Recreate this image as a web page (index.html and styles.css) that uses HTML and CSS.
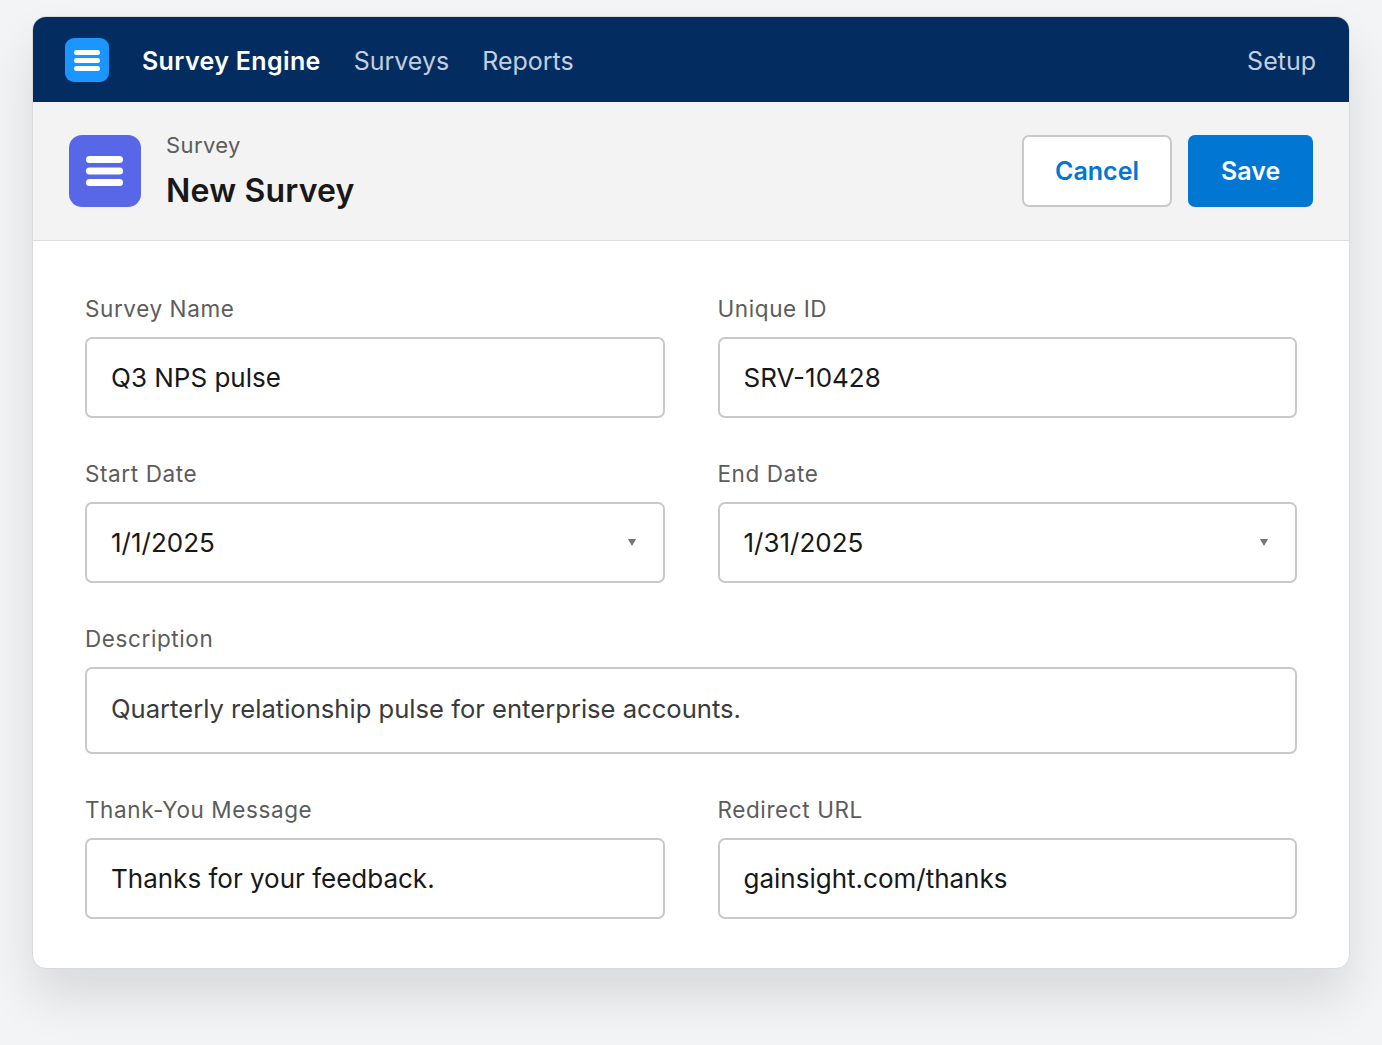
FILE: index.html
```html
<!DOCTYPE html>
<html lang="en">
<head>
<meta charset="utf-8">
<title>New Survey</title>
<link rel="stylesheet" href="styles.css">
</head>
<body>
<div class="card">
  <nav class="topnav">
    <div class="app-icon">
      <svg width="44" height="44" viewBox="0 0 44 44"><rect width="44" height="44" rx="9" fill="#1b96ff"/><rect x="9" y="12" width="26" height="5" rx="2.5" fill="#fff"/><rect x="9" y="20" width="26" height="5" rx="2.5" fill="#fff"/><rect x="9" y="28" width="26" height="5" rx="2.5" fill="#fff"/></svg>
    </div>
    <span class="app-name">Survey Engine</span>
    <a class="nav-link">Surveys</a>
    <a class="nav-link">Reports</a>
    <span class="spacer"></span>
    <a class="nav-link">Setup</a>
  </nav>
  <header class="page-header">
    <div class="obj-icon">
      <svg width="72" height="72" viewBox="0 0 72 72"><rect width="72" height="72" rx="13" fill="#5867e8"/><rect x="17" y="21" width="37" height="7" rx="3.5" fill="#fff"/><rect x="17" y="32.5" width="37" height="7" rx="3.5" fill="#fff"/><rect x="17" y="44" width="37" height="7" rx="3.5" fill="#fff"/></svg>
    </div>
    <div class="titles">
      <div class="eyebrow">Survey</div>
      <h1 class="title">New Survey</h1>
    </div>
    <span class="spacer"></span>
    <button class="btn btn-neutral">Cancel</button>
    <button class="btn btn-brand">Save</button>
  </header>
  <form class="form">
    <div class="field">
      <label class="label">Survey Name</label>
      <div class="input">Q3 NPS pulse</div>
    </div>
    <div class="field">
      <label class="label">Unique ID</label>
      <div class="input">SRV-10428</div>
    </div>
    <div class="field">
      <label class="label">Start Date</label>
      <div class="input select">1/1/2025<span class="caret"></span></div>
    </div>
    <div class="field">
      <label class="label">End Date</label>
      <div class="input select">1/31/2025<span class="caret"></span></div>
    </div>
    <div class="field full">
      <label class="label">Description</label>
      <div class="input textarea">Quarterly relationship pulse for enterprise accounts.</div>
    </div>
    <div class="field">
      <label class="label">Thank-You Message</label>
      <div class="input">Thanks for your feedback.</div>
    </div>
    <div class="field">
      <label class="label">Redirect URL</label>
      <div class="input">gainsight.com/thanks</div>
    </div>
  </form>
</div>
</body>
</html>
```

FILE: styles.css
```css
* { box-sizing: border-box; }
html, body { margin: 0; }
body {
  background: #f3f4f6;
  font-family: Inter, "Noto Sans", "Liberation Sans", sans-serif;
  padding: 16px 32px 0 32px;
  height: 1045px;
  overflow: hidden;
}
.card {
  width: 1318px;
  background: #fff;
  border: 1px solid #d9dbde;
  border-radius: 14px;
  overflow: hidden;
  box-shadow: 0 28px 50px rgba(0, 0, 0, 0.11);
}
.topnav {
  height: 85px;
  background: #032d60;
  display: flex;
  align-items: center;
  padding: 2px 33px 0 32px;
}
.app-icon { width: 44px; height: 44px; display: flex; margin-right: 33px; margin-top: -2px; }
.app-name {
  color: #fff;
  font-size: 25px;
  font-weight: 600;
  margin-right: 33px;
  letter-spacing: 0.35px;
}
.nav-link {
  color: #c3cfdf;
  font-size: 25px;
  margin-right: 33px;
}
.nav-link:last-child { margin-right: 0; }
.spacer { flex: 1; }
.page-header {
  height: 139px;
  background: #f3f3f3;
  border-bottom: 1px solid #dddddd;
  display: flex;
  align-items: center;
  padding: 0 36px 0 36px;
}
.obj-icon { width: 72px; height: 72px; display: flex; margin-right: 25px; }
.titles { display: flex; flex-direction: column; margin-top: -3px; }
.eyebrow { color: #5c5c5c; font-size: 22px; line-height: 28px; letter-spacing: 0.4px; }
.title {
  margin: 14px 0 0 0;
  font-size: 32px;
  font-weight: 600;
  color: #181818;
  line-height: 36px;
  letter-spacing: 0.2px;
}
.btn {
  height: 72px;
  border-radius: 7px;
  font-family: inherit;
  font-size: 25px;
  font-weight: 600;
  padding: 0 31px;
}
.btn-neutral {
  background: #fff;
  border: 2px solid #c9c9c9;
  color: #0176d3;
  width: 150px;
  margin-right: 16px;
}
.btn-brand {
  background: #0176d3;
  border: 2px solid #0176d3;
  color: #fff;
  width: 125px;
}
.form {
  display: grid;
  grid-template-columns: 1fr 1fr;
  column-gap: 53px;
  row-gap: 41px;
  padding: 53px 52px 49px 52px;
}
.field { display: flex; flex-direction: column; }
.field.full { grid-column: 1 / -1; }
.label {
  color: #5c5c5c;
  font-size: 22.5px;
  line-height: 30px;
  margin-bottom: 13px;
  letter-spacing: 0.6px;
}
.input {
  height: 81px;
  border: 2px solid #c9c9c9;
  border-radius: 7px;
  display: flex;
  align-items: center;
  padding: 0 24px;
  font-size: 26px;
  color: #181818;
  position: relative;
}
.input.textarea { height: 87px; color: #3a3a3a; padding-bottom: 4px; font-size: 25.6px; }
.select { padding-right: 24px; }
.caret {
  margin-left: auto;
  width: 0; height: 0;
  border-left: 4px solid transparent;
  border-right: 4px solid transparent;
  border-top: 7px solid #747474;
  margin-right: 3px;
}
```
